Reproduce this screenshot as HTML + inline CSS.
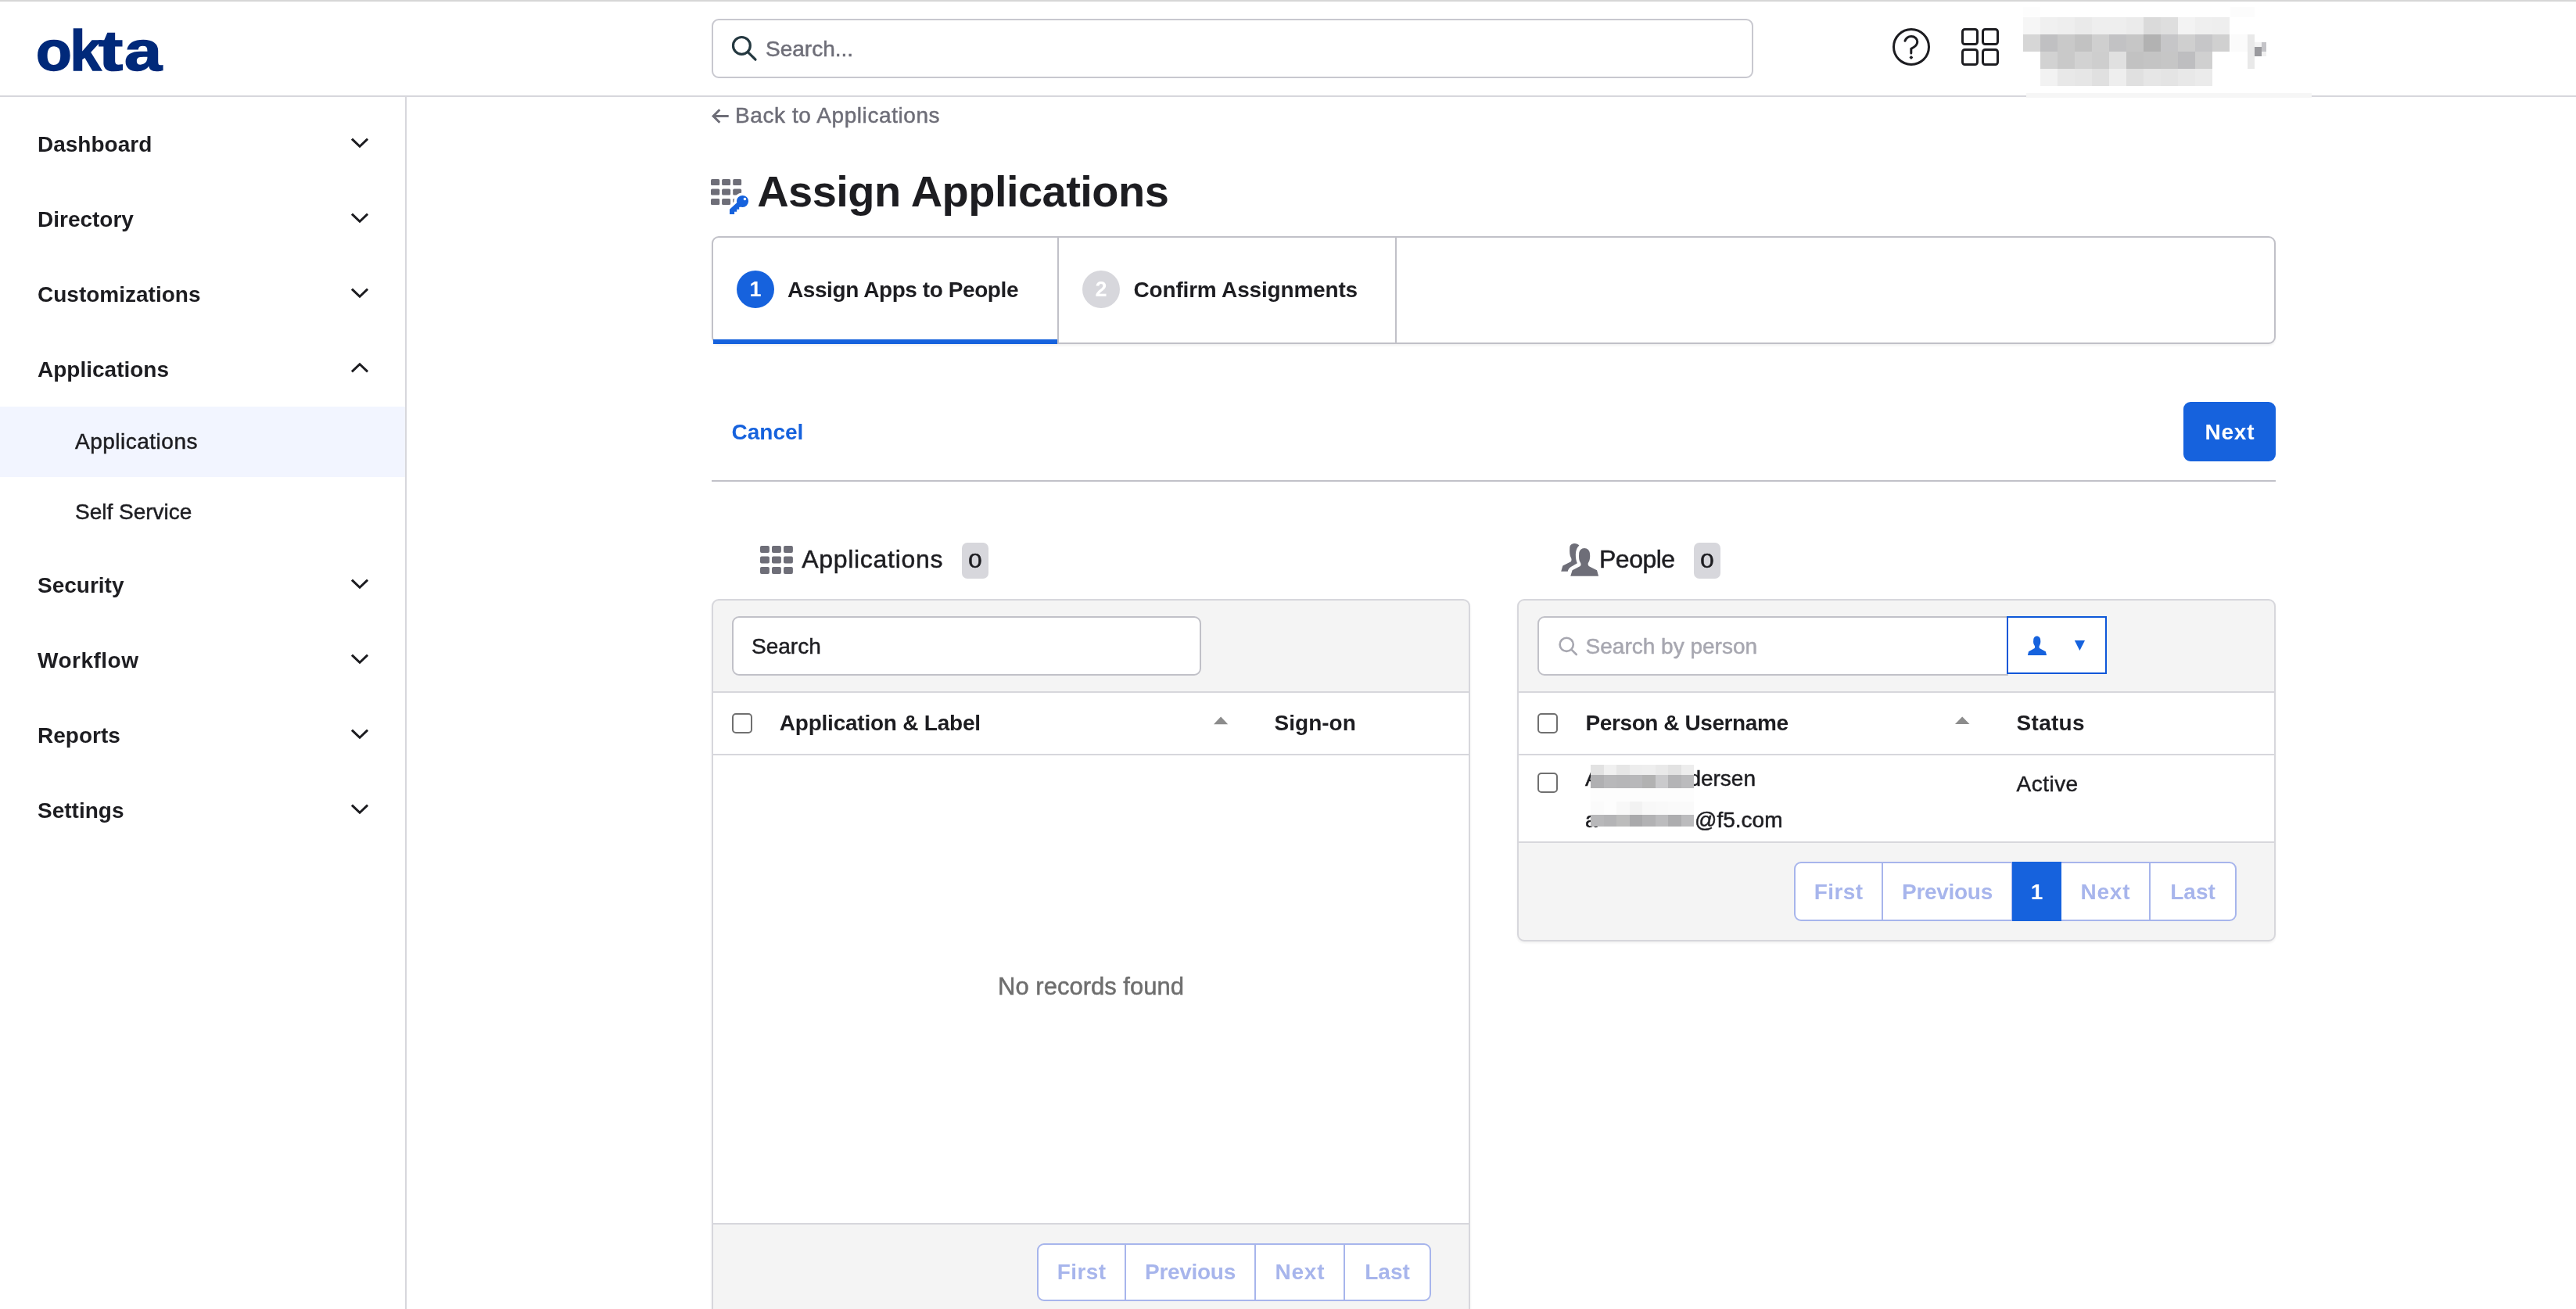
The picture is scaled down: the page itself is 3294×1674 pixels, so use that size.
<!DOCTYPE html>
<html lang="en">
<head>
<meta charset="utf-8">
<title>Assign Applications</title>
<style>
*{box-sizing:border-box;margin:0;padding:0}
html,body{width:3294px;height:1674px;overflow:hidden;background:#fff}
body{font-family:"Liberation Sans",sans-serif;color:#1d1d21;position:relative;font-size:28px}
#root{position:absolute;left:0;top:0;width:3294px;height:1674px;will-change:transform}
.abs{position:absolute}
.t{position:absolute;white-space:nowrap;line-height:1}
.t{-webkit-text-stroke:0.5px}
.b,.nav{font-weight:bold;-webkit-text-stroke:0}
#topline{left:0;top:0;width:3294px;height:2px;background:#d6d6d6}
#hdrline{left:0;top:122px;width:3294px;height:2px;background:#d7d7dc}
#sideline{left:518px;top:124px;width:2px;height:1550px;background:#d7d7dc}
#logo{left:45.5px;top:29px;font-size:72px;font-weight:bold;color:#00297a;-webkit-text-stroke:1.6px #00297a}#logo span{display:inline-block;transform-origin:0 50%}
#gsearch{left:910px;top:24px;width:1332px;height:76px;border:2px solid #c8c8cf;border-radius:9px;background:#fff}
.nav{left:48px;font-weight:bold;font-size:28px;color:#1d1d21}
.sub{left:96px;font-size:28px;color:#1d1d21}
.chev{position:absolute;left:448px;width:24px;height:14px}
#navsel{left:0;top:520px;width:518px;height:90px;background:#f2f5ff}
.box{position:absolute;border:2px solid #c1c1c8;border-radius:9px;background:#fff}
.panel{position:absolute;border:2px solid #d7d7dc;border-radius:9px;background:#f4f4f4;overflow:hidden;box-shadow:0 2px 3px rgba(0,0,0,0.06)}
.hl{position:absolute;height:2px;background:#d7d7dc}
.cb{position:absolute;width:26px;height:26px;border:2px solid #707070;border-radius:5px;background:#fff}
.badge{position:absolute;background:#d7d7dc;border-radius:7px}
.pg{position:absolute;height:74px;border:2px solid #a7b5ec;background:#fff;color:#a7b5ec;font-weight:bold;font-size:28px;line-height:70px;text-align:center;white-space:nowrap}
.px{position:absolute}
</style>
</head>
<body>
<div id="root">
<div class="abs" id="topline"></div>
<div class="abs" id="hdrline"></div>
<div class="abs" id="sideline"></div>

<!-- HEADER -->
<div class="t" id="logo"><span style="transform:scaleX(1.04);width:44px">o</span><span style="width:36px">k</span><span style="width:33.5px;transform:scaleX(1.3)">t</span><span style="transform:scaleX(1.2)">a</span></div>
<div class="abs" id="gsearch"></div>
<svg class="abs" style="left:930px;top:40px" width="44" height="44" viewBox="0 0 44 44" fill="none" stroke="#243840" stroke-width="3.2" stroke-linecap="round"><circle cx="18.4" cy="18.4" r="10.9"/><path d="M26.6 26.8 L36 36.2"/></svg>
<div class="t" style="left:979px;top:49.3px;font-size:28px;color:#6e6e78">Search...</div>
<svg class="abs" style="left:2416px;top:32px" width="56" height="56" viewBox="2416 32 56 56" fill="none" stroke="#1d1d21" stroke-width="3" stroke-linecap="round" stroke-linejoin="round"><circle cx="2444" cy="60" r="22.5"/><path d="M2436 52.3 C2437.5 48.5 2440.5 46.6 2444 46.6 C2448.6 46.6 2451.8 49.6 2451.8 53.6 C2451.8 58.3 2447.6 60.6 2443.8 62.4 L2443.8 68"/><path d="M2443.9 71.9 L2445.5 73.5 L2443.9 75.1 L2442.3 73.5 Z" fill="#1d1d21" stroke-width="1.4"/></svg>
<svg class="abs" style="left:2504px;top:32px" width="56" height="56" viewBox="2504 32 56 56" fill="none" stroke="#1d1d21" stroke-width="3"><rect x="2509.5" y="37.5" width="19" height="19" rx="3"/><rect x="2535.5" y="37.5" width="19" height="19" rx="3"/><rect x="2509.5" y="63.5" width="19" height="19" rx="3"/><rect x="2535.5" y="63.5" width="19" height="19" rx="3"/></svg>
<svg class="abs" style="left:2580px;top:0px" width="400" height="130" viewBox="2580 0 400 130" shape-rendering="crispEdges"><rect x="2591" y="119" width="365" height="6" fill="#f6f6f6"/><rect x="2587" y="9" width="22" height="13" fill="#fdfdfd"/><rect x="2852" y="9" width="31" height="13" fill="#fcfcfc"/><rect x="2587" y="22" width="22" height="22" fill="#f6f6f6"/><rect x="2609" y="22" width="22" height="22" fill="#f0f0f0"/><rect x="2631" y="22" width="22" height="22" fill="#eeeeee"/><rect x="2653" y="22" width="22" height="22" fill="#eaeaea"/><rect x="2675" y="22" width="22" height="22" fill="#eeeeee"/><rect x="2697" y="22" width="22" height="22" fill="#eeeeee"/><rect x="2719" y="22" width="22" height="22" fill="#ebebeb"/><rect x="2741" y="22" width="22" height="22" fill="#dadada"/><rect x="2763" y="22" width="22" height="22" fill="#dedede"/><rect x="2785" y="22" width="22" height="22" fill="#f3f3f3"/><rect x="2807" y="22" width="22" height="22" fill="#efefef"/><rect x="2829" y="22" width="22" height="22" fill="#eeeeee"/><rect x="2587" y="44" width="22" height="22" fill="#d6d6d6"/><rect x="2609" y="44" width="22" height="22" fill="#c0c0c2"/><rect x="2631" y="44" width="22" height="22" fill="#c9c9c9"/><rect x="2653" y="44" width="22" height="22" fill="#c2c2c2"/><rect x="2675" y="44" width="22" height="22" fill="#cfcfcf"/><rect x="2697" y="44" width="22" height="22" fill="#c2c2c4"/><rect x="2719" y="44" width="22" height="22" fill="#c6c6c6"/><rect x="2741" y="44" width="22" height="22" fill="#b2b2b2"/><rect x="2763" y="44" width="22" height="22" fill="#c6c6c8"/><rect x="2785" y="44" width="22" height="22" fill="#cfcfcf"/><rect x="2807" y="44" width="22" height="22" fill="#c6c6c8"/><rect x="2829" y="44" width="22" height="22" fill="#d0d0d0"/><rect x="2609" y="66" width="22" height="22" fill="#d2d2d2"/><rect x="2631" y="66" width="22" height="22" fill="#c9c9c9"/><rect x="2653" y="66" width="22" height="22" fill="#d2d2d2"/><rect x="2675" y="66" width="22" height="22" fill="#cecece"/><rect x="2697" y="66" width="22" height="22" fill="#e0e0e0"/><rect x="2719" y="66" width="22" height="22" fill="#c2c2c2"/><rect x="2741" y="66" width="22" height="22" fill="#c4c4c4"/><rect x="2763" y="66" width="22" height="22" fill="#c6c6c6"/><rect x="2785" y="66" width="22" height="22" fill="#bebec0"/><rect x="2807" y="66" width="22" height="22" fill="#d0d0d0"/><rect x="2609" y="88" width="22" height="22" fill="#f2f2f2"/><rect x="2631" y="88" width="22" height="22" fill="#e8e8e8"/><rect x="2653" y="88" width="22" height="22" fill="#e6e6e6"/><rect x="2675" y="88" width="22" height="22" fill="#e0e0e0"/><rect x="2697" y="88" width="22" height="22" fill="#eeeeee"/><rect x="2719" y="88" width="22" height="22" fill="#e0e0e0"/><rect x="2741" y="88" width="22" height="22" fill="#e6e6e6"/><rect x="2763" y="88" width="22" height="22" fill="#e4e4e4"/><rect x="2785" y="88" width="22" height="22" fill="#e8e8e8"/><rect x="2807" y="88" width="22" height="22" fill="#ebebeb"/><rect x="2852" y="44" width="22" height="22" fill="#fbfbfb"/><rect x="2874" y="44" width="9" height="44" fill="#e9e9e9"/><rect x="2883" y="60" width="9" height="12" fill="#9a9a9e"/><rect x="2892" y="54" width="6" height="12" fill="#c4c4c8"/><rect x="2883" y="54" width="9" height="6" fill="#f4f4f4"/><rect x="2892" y="66" width="6" height="6" fill="#f0f0f0"/></svg>
<!-- SIDEBAR -->
<div class="abs" id="navsel"></div>
<div class="t nav" style="top:171.3px">Dashboard</div>
<svg class="abs" style="left:440px;top:167.5px" width="40" height="30" viewBox="440 167.5 40 30" fill="none" stroke="#1d1d21" stroke-width="3" stroke-linecap="square"><polyline points="451,178.2 460,186.8 469,178.2"/></svg>
<div class="t nav" style="top:267.3px">Directory</div>
<svg class="abs" style="left:440px;top:263.5px" width="40" height="30" viewBox="440 263.5 40 30" fill="none" stroke="#1d1d21" stroke-width="3" stroke-linecap="square"><polyline points="451,274.2 460,282.8 469,274.2"/></svg>
<div class="t nav" style="top:363.3px">Customizations</div>
<svg class="abs" style="left:440px;top:359.5px" width="40" height="30" viewBox="440 359.5 40 30" fill="none" stroke="#1d1d21" stroke-width="3" stroke-linecap="square"><polyline points="451,370.2 460,378.8 469,370.2"/></svg>
<div class="t nav" style="top:459.3px">Applications</div>
<svg class="abs" style="left:440px;top:455.5px" width="40" height="30" viewBox="440 455.5 40 30" fill="none" stroke="#1d1d21" stroke-width="3" stroke-linecap="square"><polyline points="451,473.8 460,465.2 469,473.8"/></svg>
<div class="t nav" style="top:735.3px">Security</div>
<svg class="abs" style="left:440px;top:731.5px" width="40" height="30" viewBox="440 731.5 40 30" fill="none" stroke="#1d1d21" stroke-width="3" stroke-linecap="square"><polyline points="451,742.2 460,750.8 469,742.2"/></svg>
<div class="t nav" style="top:831.3px;letter-spacing:0.5px">Workflow</div>
<svg class="abs" style="left:440px;top:827.5px" width="40" height="30" viewBox="440 827.5 40 30" fill="none" stroke="#1d1d21" stroke-width="3" stroke-linecap="square"><polyline points="451,838.2 460,846.8 469,838.2"/></svg>
<div class="t nav" style="top:927.3px">Reports</div>
<svg class="abs" style="left:440px;top:923.5px" width="40" height="30" viewBox="440 923.5 40 30" fill="none" stroke="#1d1d21" stroke-width="3" stroke-linecap="square"><polyline points="451,934.2 460,942.8 469,934.2"/></svg>
<div class="t nav" style="top:1023.3px">Settings</div>
<svg class="abs" style="left:440px;top:1019.5px" width="40" height="30" viewBox="440 1019.5 40 30" fill="none" stroke="#1d1d21" stroke-width="3" stroke-linecap="square"><polyline points="451,1030.2 460,1038.8 469,1030.2"/></svg>
<div class="t sub" style="top:551.3px;letter-spacing:0.5px">Applications</div>
<div class="t sub" style="top:641.3px">Self Service</div>
<!-- MAIN -->
<svg class="abs" style="left:906px;top:136px" width="30" height="26" viewBox="906 136 30 26" fill="none" stroke="#6e6e78" stroke-width="3" stroke-linecap="butt" stroke-linejoin="miter"><path d="M912.5 148.5 H931.7"/><path d="M920.3 140.3 L912.1 148.5 L920.3 156.7"/></svg>
<div class="t" style="left:940px;top:134.3px;font-size:28px;color:#6e6e78;letter-spacing:0.58px">Back to Applications</div>
<svg class="abs" style="left:900px;top:220px" width="70" height="60" viewBox="900 220 70 60">
<g fill="#6e6e78"><rect x="909" y="229.1" width="11.2" height="8" rx="1.6"/><rect x="923.1" y="229.1" width="11" height="8" rx="1.6"/><rect x="937.2" y="229.1" width="10.9" height="8" rx="1.6"/>
<rect x="909" y="241.6" width="11.2" height="8" rx="1.6"/><rect x="923.1" y="241.6" width="11" height="8" rx="1.6"/><rect x="937.2" y="241.6" width="10.9" height="8" rx="1.6"/>
<rect x="909" y="254" width="11.2" height="8.1" rx="1.6"/><rect x="923.1" y="254" width="11" height="8.1" rx="1.6"/><rect x="937.2" y="254" width="10.9" height="8.1" rx="1.6"/></g>
<g fill="#1662dd" stroke="#fff" stroke-width="7" stroke-linejoin="round"><circle cx="949.5" cy="257.4" r="7.5"/><path d="M933 267.8 L942.2 259.2 L947.5 264.5 L945.2 265 L945.2 267.8 L942.2 267.8 L942.2 270.8 L939.1 270.8 L939.1 273.9 L933 273.9 Z"/></g>
<g fill="#1662dd"><circle cx="949.5" cy="257.4" r="7.5"/><path d="M933 267.8 L943 258.4 L948.5 264 L945.2 265 L945.2 267.8 L942.2 267.8 L942.2 270.8 L939.1 270.8 L939.1 273.9 L933 273.9 Z"/></g>
<circle cx="952.4" cy="254.5" r="1.7" fill="#fff"/></svg>
<div class="t b" style="left:968.2px;top:216.6px;font-size:56px;color:#1d1d21;letter-spacing:-0.53px">Assign Applications</div>
<div class="box" style="left:910px;top:302px;width:2000px;height:138px;border-color:#c1c1c8;box-shadow:0 2px 3px rgba(0,0,0,0.06)"></div>
<div class="abs" style="left:1352px;top:304px;width:2px;height:134px;background:#c1c1c8"></div>
<div class="abs" style="left:1784px;top:304px;width:2px;height:134px;background:#c1c1c8"></div>
<div class="abs" style="left:912px;top:434px;width:440px;height:6px;background:#1662dd"></div>
<div class="abs" style="left:942px;top:346px;width:48px;height:48px;border-radius:50%;background:#1662dd"></div>
<div class="t b" style="left:942px;width:48px;text-align:center;top:356.6px;font-size:27px;color:#fff">1</div>
<div class="t b" style="left:1007px;top:357.3px;font-size:28px;letter-spacing:-0.42px">Assign Apps to People</div>
<div class="abs" style="left:1384px;top:346px;width:48px;height:48px;border-radius:50%;background:#d7d7dc"></div>
<div class="t b" style="left:1384px;width:48px;text-align:center;top:356.6px;font-size:27px;color:#fff">2</div>
<div class="t b" style="left:1449.5px;top:357.3px;font-size:28px;letter-spacing:-0.18px">Confirm Assignments</div>
<div class="t b" style="left:935.5px;top:539.3px;font-size:28px;color:#1662dd">Cancel</div>
<div class="abs" style="left:2792px;top:514px;width:118px;height:76px;border-radius:9px;background:#1662dd"></div>
<div class="t b" style="left:2792px;width:118px;text-align:center;top:539.3px;font-size:28px;color:#fff;letter-spacing:0.8px;text-indent:0.8px">Next</div>
<div class="abs" style="left:910px;top:614px;width:2000px;height:2px;background:#c1c1c8"></div>
<!-- APPS PANEL -->
<svg class="abs" style="left:968px;top:694px" width="50" height="44" viewBox="968 694 50 44" fill="#6e6e78"><rect x="972" y="698" width="11.9" height="8.9" rx="1.9"/><rect x="972" y="711.5" width="11.9" height="8.9" rx="1.9"/><rect x="972" y="725" width="11.9" height="8.9" rx="1.9"/><rect x="987" y="698" width="11.9" height="8.9" rx="1.9"/><rect x="987" y="711.5" width="11.9" height="8.9" rx="1.9"/><rect x="987" y="725" width="11.9" height="8.9" rx="1.9"/><rect x="1002" y="698" width="11.9" height="8.9" rx="1.9"/><rect x="1002" y="711.5" width="11.9" height="8.9" rx="1.9"/><rect x="1002" y="725" width="11.9" height="8.9" rx="1.9"/></svg>
<div class="t" style="left:1025.2px;top:698.7px;font-size:32px;letter-spacing:0.7px">Applications</div>
<div class="badge" style="left:1230px;top:694px;width:34px;height:46px"></div>
<div class="t" style="left:1230px;width:34px;text-align:center;top:703.6px;font-size:26.5px;transform:scaleX(1.18)">0</div>
<div class="panel" style="left:910px;top:766px;width:970px;height:920px"></div>
<div class="box" style="left:936px;top:788px;width:600px;height:76px"></div>
<div class="t" style="left:961px;top:813.3px;font-size:28px">Search</div>
<div class="abs" style="left:912px;top:884px;width:966px;height:682px;background:#fff"></div>
<div class="hl" style="left:912px;top:884px;width:966px"></div>
<div class="hl" style="left:912px;top:964px;width:966px"></div>
<div class="hl" style="left:912px;top:1564px;width:966px"></div>
<div class="cb" style="left:936px;top:912px"></div>
<div class="t b" style="left:996.8px;top:910.8px;font-size:28px;letter-spacing:-0.23px">Application &amp; Label</div>
<svg class="abs" style="left:1550px;top:914px" width="22" height="14" viewBox="1550 914 22 14"><path d="M1552 926.3 L1561.1 916.6 L1570.2 926.3 Z" fill="#8c8c8c"/></svg>
<div class="t b" style="left:1629.6px;top:910.8px;font-size:28px">Sign-on</div>
<div class="t" style="left:912px;width:966px;text-align:center;top:1246.4px;font-size:31px;color:#6e6e6e">No records found</div>
<div class="pg" style="left:1326px;top:1590px;width:114px;border-radius:9px 0 0 9px;letter-spacing:0.4px;text-indent:0.4px;">First</div>
<div class="pg" style="left:1438px;top:1590px;width:168px;letter-spacing:-0.3px;">Previous</div>
<div class="pg" style="left:1604px;top:1590px;width:116px;letter-spacing:0.8px;text-indent:0.8px;">Next</div>
<div class="pg" style="left:1718px;top:1590px;width:112px;border-radius:0 9px 9px 0;">Last</div>
<!-- PEOPLE PANEL -->
<svg class="abs" style="left:1980px;top:680px" width="100" height="80" viewBox="0 0 1636 1309" fill="#6e6e78"><path d="M265 830 L300 712 L470 625 C490 600 485 570 470 540 C445 500 440 420 445 340 C445 280 490 245 550 245 C590 245 620 262 645 285 C600 320 575 380 570 470 C570 550 580 610 603 660 L470 735 C430 760 415 790 405 830 Z"/><path d="M462 930 L500 805 L665 720 C690 690 680 660 665 640 C640 600 635 540 640 470 C640 390 690 343 752 343 C815 343 868 390 868 470 C875 540 865 600 840 640 C825 660 820 690 845 720 L1015 805 L1048 930 Z"/></svg>
<div class="t" style="left:2045px;top:699.2px;font-size:32px;letter-spacing:-0.5px">People</div>
<div class="badge" style="left:2166px;top:694px;width:34px;height:46px"></div>
<div class="t" style="left:2166px;width:34px;text-align:center;top:703.6px;font-size:26.5px;transform:scaleX(1.18)">0</div>
<div class="panel" style="left:1940px;top:766px;width:970px;height:438px"></div>
<div class="box" style="left:1966px;top:788px;width:602px;height:76px;border-radius:9px 0 0 9px"></div>
<svg class="abs" style="left:1990px;top:812px" width="30" height="30" viewBox="1990 812 30 30" fill="none" stroke="#a7a7b0" stroke-width="2.6" stroke-linecap="round"><circle cx="2003.2" cy="824.3" r="8.6"/><path d="M2009.6 830.8 L2015.8 837"/></svg>
<div class="t" style="left:2027.6px;top:812.7px;font-size:28px;color:#a7a7b0">Search by person</div>
<div class="abs" style="left:2566px;top:788px;width:128px;height:74px;border:2px solid #0d57d8;background:#fff"></div>
<svg class="abs" style="left:2560px;top:780px" width="140" height="90" viewBox="0 0 2036 1309" fill="#1662dd"><path d="M478 845 L495 775 L600 715 C618 700 615 680 605 660 C585 640 578 600 585 560 C585 520 610 488 648 488 C688 488 715 520 715 560 C722 600 712 640 698 660 C688 680 685 700 705 715 L812 775 L830 845 Z"/><path d="M1350 568 L1542 568 L1446 758 Z"/></svg>
<div class="abs" style="left:1942px;top:884px;width:966px;height:194px;background:#fff"></div>
<div class="hl" style="left:1942px;top:884px;width:966px"></div>
<div class="hl" style="left:1942px;top:964px;width:966px"></div>
<div class="hl" style="left:1942px;top:1076px;width:966px"></div>
<div class="cb" style="left:1966px;top:912px"></div>
<div class="t b" style="left:2027.6px;top:910.8px;font-size:28px;letter-spacing:-0.42px">Person &amp; Username</div>
<svg class="abs" style="left:2498px;top:914px" width="22" height="14" viewBox="2498 914 22 14"><path d="M2500 926 L2509.2 916.6 L2518.5 926 Z" fill="#8c8c8c"/></svg>
<div class="t b" style="left:2578.6px;top:910.8px;font-size:28px;letter-spacing:0.27px">Status</div>
<div class="cb" style="left:1966px;top:988px"></div>
<div class="t" style="left:2027px;top:981.6px;font-size:28px">A</div>
<div class="t" style="left:2159.4px;top:981.6px;font-size:28px">dersen</div>
<div class="t" style="left:2027px;top:1035.3px;font-size:28px">a</div>
<div class="t" style="left:2167px;top:1035.3px;font-size:28px">@f5.com</div>
<svg class="abs" style="left:2030px;top:975px" width="140" height="85" viewBox="2030 975 140 85" shape-rendering="crispEdges"><rect x="2034.0" y="978" width="16.6" height="12.7" fill="#e2e2e2"/><rect x="2050.5" y="978" width="16.6" height="12.7" fill="#f0f0f0"/><rect x="2067.0" y="978" width="16.6" height="12.7" fill="#e6e6e6"/><rect x="2083.5" y="978" width="16.6" height="12.7" fill="#ededed"/><rect x="2100.0" y="978" width="16.6" height="12.7" fill="#eeeeee"/><rect x="2116.5" y="978" width="16.6" height="12.7" fill="#e9e9e9"/><rect x="2133.0" y="978" width="16.6" height="12.7" fill="#e2e2e2"/><rect x="2149.5" y="978" width="16.6" height="12.7" fill="#ededed"/><rect x="2034.0" y="990.6" width="16.6" height="17.400000000000002" fill="#b0b0b2"/><rect x="2050.5" y="990.6" width="16.6" height="17.400000000000002" fill="#b8b8ba"/><rect x="2067.0" y="990.6" width="16.6" height="17.400000000000002" fill="#b6b6b8"/><rect x="2083.5" y="990.6" width="16.6" height="17.400000000000002" fill="#b8b8ba"/><rect x="2100.0" y="990.6" width="16.6" height="17.400000000000002" fill="#b2b2b2"/><rect x="2116.5" y="990.6" width="16.6" height="17.400000000000002" fill="#cacacc"/><rect x="2133.0" y="990.6" width="16.6" height="17.400000000000002" fill="#b4b4b6"/><rect x="2149.5" y="990.6" width="16.6" height="17.400000000000002" fill="#bbbbbd"/><rect x="2034.0" y="1007.9" width="16.6" height="17.200000000000003" fill="#fdfdfd"/><rect x="2050.5" y="1007.9" width="16.6" height="17.200000000000003" fill="#fdfdfd"/><rect x="2067.0" y="1007.9" width="16.6" height="17.200000000000003" fill="#fdfdfd"/><rect x="2083.5" y="1007.9" width="16.6" height="17.200000000000003" fill="#fdfdfd"/><rect x="2100.0" y="1007.9" width="16.6" height="17.200000000000003" fill="#fdfdfd"/><rect x="2116.5" y="1007.9" width="16.6" height="17.200000000000003" fill="#fdfdfd"/><rect x="2133.0" y="1007.9" width="16.6" height="17.200000000000003" fill="#fdfdfd"/><rect x="2149.5" y="1007.9" width="16.6" height="17.200000000000003" fill="#fdfdfd"/><rect x="2034.0" y="1025" width="16.6" height="17.0" fill="#fbfbfb"/><rect x="2050.5" y="1025" width="16.6" height="17.0" fill="#fdfdfd"/><rect x="2067.0" y="1025" width="16.6" height="17.0" fill="#f8f8f8"/><rect x="2083.5" y="1025" width="16.6" height="17.0" fill="#f2f2f2"/><rect x="2100.0" y="1025" width="16.6" height="17.0" fill="#f8f8f8"/><rect x="2116.5" y="1025" width="16.6" height="17.0" fill="#f9f9f9"/><rect x="2133.0" y="1025" width="16.6" height="17.0" fill="#fafafa"/><rect x="2149.5" y="1025" width="16.6" height="17.0" fill="#fafafa"/><rect x="2034.0" y="1041.9" width="16.6" height="15.0" fill="#b8b8ba"/><rect x="2050.5" y="1041.9" width="16.6" height="15.0" fill="#b4b4b6"/><rect x="2067.0" y="1041.9" width="16.6" height="15.0" fill="#bcbcbc"/><rect x="2083.5" y="1041.9" width="16.6" height="15.0" fill="#a9a9ab"/><rect x="2100.0" y="1041.9" width="16.6" height="15.0" fill="#b2b2b4"/><rect x="2116.5" y="1041.9" width="16.6" height="15.0" fill="#bcbcbe"/><rect x="2133.0" y="1041.9" width="16.6" height="15.0" fill="#adadaf"/><rect x="2149.5" y="1041.9" width="16.6" height="15.0" fill="#bbbbbd"/></svg>
<div class="t" style="left:2578.6px;top:989.0px;font-size:28px;letter-spacing:0.47px">Active</div>
<div class="pg" style="left:2294px;top:1102px;width:114px;height:76px;line-height:74px;border-radius:9px 0 0 9px;letter-spacing:0.4px;text-indent:0.4px;">First</div>
<div class="pg" style="left:2406px;top:1102px;width:168px;height:76px;line-height:74px;letter-spacing:-0.3px;">Previous</div>
<div class="pg" style="left:2634px;top:1102px;width:116px;height:76px;line-height:74px;letter-spacing:0.8px;text-indent:0.8px;">Next</div>
<div class="pg" style="left:2748px;top:1102px;width:112px;height:76px;line-height:74px;border-radius:0 9px 9px 0;">Last</div>
<div class="pg" style="left:2573px;top:1102px;width:63px;height:76px;line-height:74px;background:#1662dd;border-color:#1662dd;color:#fff">1</div>
</div>
</body>
</html>
